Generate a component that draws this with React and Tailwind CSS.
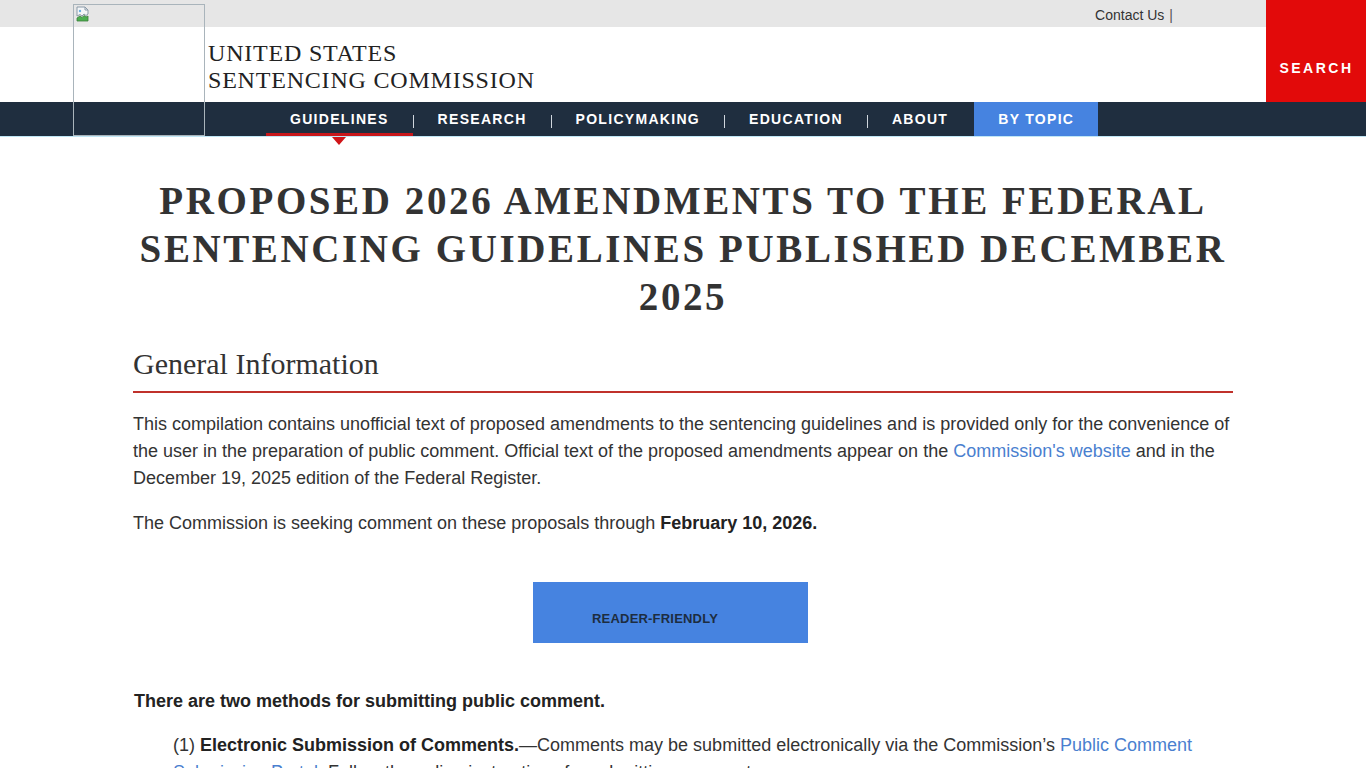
import React from 'react';

const sans = { fontFamily: '"Liberation Sans", Arial, sans-serif' };
const serif = { fontFamily: '"Liberation Serif", "Times New Roman", serif' };

const BrokenImage = () => (
  <svg width="16" height="16" viewBox="0 0 16 16" className="block">
    <path d="M2 1h8l3 3v4l-2 1.5L9 8l-2 2-2-1.5L2 10z" fill="#f4f6f8" stroke="#8a9aa8" strokeWidth="1" />
    <path d="M10 1v3h3" fill="none" stroke="#8a9aa8" strokeWidth="1" />
    <path d="M2 12l3-2 2 1.5 2-2 2 1.5 2-1V15H2z" fill="#4caf50" stroke="#3b7d3b" strokeWidth="0.8" />
    <circle cx="5" cy="5" r="1.2" fill="#6ab0e0" />
  </svg>
);

const navItems = ['GUIDELINES', 'RESEARCH', 'POLICYMAKING', 'EDUCATION', 'ABOUT'];

const Header = () => (
  <header className="relative" style={sans}>
    <div className="flex">
      <div className="flex-1">
        <div className="h-[27px] bg-[#e6e6e6] flex items-center justify-end pr-[93px] pt-[4px]">
          <span className="text-[14px] text-[#333]">Contact Us</span>
          <span className="text-[14px] text-[#555] ml-[5px]">|</span>
        </div>
        <div className="h-[75px] bg-white flex items-center pl-[208px]">
          <div className="text-[24px] leading-[27px] tracking-[0.8px] text-[#222] pt-[4px]" style={serif}>
            <div>UNITED STATES</div>
            <div>SENTENCING COMMISSION</div>
          </div>
        </div>
      </div>
      <div className="w-[100px] h-[102px] bg-[#e20a0a] flex items-end justify-center pb-[23px]">
        <span className="text-white font-bold text-[14px] tracking-[2.5px] pl-[1px]">SEARCH</span>
      </div>
    </div>
    <nav className="h-[34px] bg-[#1f2e3f] flex items-stretch pl-[266px]">
      {navItems.map((item, i) => (
        <React.Fragment key={item}>
          <div className="relative flex items-center px-6">
            <span className="text-white font-bold text-[14px] tracking-[1.3px]">{item}</span>
            {i === 0 && (
              <>
                <div className="absolute left-0 right-0 bottom-0 h-[3px] bg-[#c8171b]" />
                <div className="absolute left-1/2 -translate-x-1/2 top-[35px] w-0 h-0 border-l-[7px] border-r-[7px] border-t-[8px] border-l-transparent border-r-transparent border-t-[#d01418] z-10" />
              </>
            )}
          </div>
          {i < navItems.length - 1 && (
            <div className="w-px h-[13px] bg-[#cfd6dd] self-center mt-[5px]" />
          )}
        </React.Fragment>
      ))}
      <div className="ml-[2px] bg-[#4683e0] flex items-center px-6">
        <span className="text-white font-bold text-[14px] tracking-[1.3px]">BY TOPIC</span>
      </div>
    </nav>
    <div className="h-px bg-[#bfe6f5]" />
    <div className="absolute left-[73px] top-[4px] w-[132px] h-[132px] border border-[#a9b4bb] pl-[1px] pt-[1px]">
      <BrokenImage />
    </div>
  </header>
);

const App = () => (
  <div className="bg-white min-h-screen text-[#222]" style={sans}>
    <Header />
    <main className="w-[1100px] mx-auto pt-[40px]">
      <h1
        className="text-center font-bold text-[39px] leading-[48px] tracking-[2.6px] text-[#333]"
        style={serif}
      >
        PROPOSED 2026 AMENDMENTS TO THE FEDERAL SENTENCING GUIDELINES PUBLISHED DECEMBER 2025
      </h1>
      <h2 className="mt-[25px] text-[30px] leading-[36px] text-[#333]" style={serif}>
        General Information
      </h2>
      <div className="mt-[9px] h-[2px] bg-[#c0312b]" />
      <p className="mt-[18px] text-[18px] leading-[27px] text-[#333]">
        This compilation contains unofficial text of proposed amendments to the sentencing guidelines and is provided only for the convenience of the user in the preparation of public comment. Official text of the proposed amendments appear on the{' '}
        <a className="text-[#4a7fcf]">Commission's website</a> and in the December 19, 2025 edition of the Federal Register.
      </p>
      <p className="mt-[18px] text-[18px] leading-[27px] text-[#333]">
        The Commission is seeking comment on these proposals through <strong className="text-[#222]">February 10, 2026.</strong>
      </p>
      <div className="mt-[45px] ml-[400px] w-[275px] h-[61px] bg-[#4683e0] pl-[59px] pt-[24px]">
        <span className="text-[13px] font-bold tracking-[0.2px] text-[#1d2d40]">READER-FRIENDLY</span>
      </div>
      <p className="mt-[45px] text-[18px] leading-[27px] font-bold text-[#222] pl-[1px]">
        There are two methods for submitting public comment.
      </p>
      <p className="mt-[17px] pl-[40px] text-[18px] leading-[27px] text-[#333]">
        (1) <strong className="text-[#222]">Electronic Submission of Comments.</strong>—Comments may be submitted electronically via the Commission’s{' '}
        <a className="text-[#4a7fcf]">Public Comment Submission Portal</a>. Follow the online instructions for submitting comments.
      </p>
    </main>
  </div>
);

export default App;
